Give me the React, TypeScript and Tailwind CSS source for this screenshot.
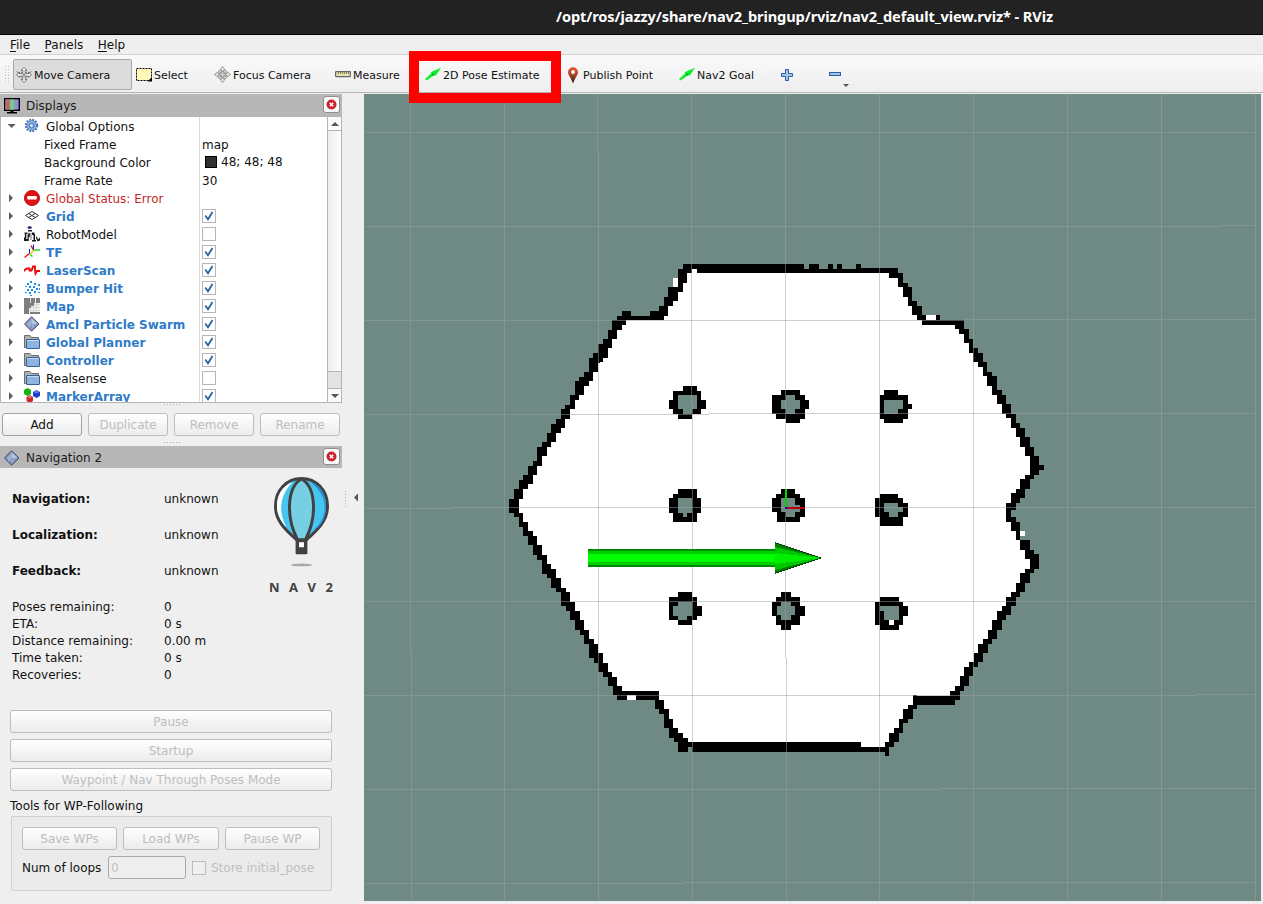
import React from "react";

type Box = [number, number, number, number];

const UNKNOWN = "#6f8984";

/* Occupancy map tiles. Each tile holds boxes (x1, y1, x2, y2) in thirds of a pixel. */
type Tile = { x: number; y: number; black: Box[]; gray: Box[]; white: Box[] };

const tiles: Tile[] = [
  {
    x: 500,
    y: 250,
    black: [
      [549, 42, 900, 57], [534, 57, 576, 69], [591, 42, 900, 69], [534, 57, 561, 99], [534, 99, 549, 126],
      [504, 111, 534, 153], [492, 141, 519, 168], [477, 168, 504, 198], [450, 183, 492, 210], [351, 198, 450, 210],
      [366, 183, 393, 210], [336, 211, 378, 225], [336, 211, 366, 240], [324, 240, 351, 267], [309, 267, 336, 294],
      [294, 282, 324, 324], [300, 324, 309, 336], [279, 309, 300, 339], [267, 324, 294, 366], [252, 366, 279, 393],
      [237, 381, 267, 408], [225, 393, 252, 435], [210, 435, 237, 450], [210, 450, 225, 477], [195, 465, 225, 477],
      [183, 477, 210, 507], [168, 507, 195, 534], [153, 522, 183, 549], [141, 549, 168, 576], [126, 576, 153, 591],
      [111, 591, 141, 618], [111, 618, 126, 648], [99, 633, 126, 648], [84, 648, 111, 675], [69, 675, 99, 702],
      [57, 690, 84, 717], [42, 717, 69, 747], [27, 747, 57, 789],
      [549, 408, 591, 435], [519, 423, 603, 492], [507, 450, 618, 477], [534, 492, 576, 507],
    ],
    gray: [[393, 183, 450, 198], [534, 435, 591, 477], [549, 477, 576, 492]],
    white: [[519, 84, 534, 111], [576, 57, 591, 69]],
  },
  {
    x: 780,
    y: 250,
    black: [
      [0, 42, 72, 69], [0, 54, 354, 69], [87, 42, 117, 57], [144, 42, 159, 57], [171, 42, 186, 57], [228, 42, 243, 57],
      [327, 69, 369, 84], [354, 69, 369, 111], [369, 99, 384, 111], [369, 111, 396, 141], [384, 141, 396, 168],
      [384, 153, 411, 168], [396, 168, 426, 195], [411, 195, 438, 210], [468, 195, 480, 210], [426, 210, 552, 225],
      [525, 225, 552, 237], [537, 237, 567, 252], [552, 252, 567, 279], [567, 267, 579, 309], [579, 294, 594, 309],
      [579, 309, 609, 336], [594, 336, 621, 351], [609, 351, 621, 378], [621, 366, 636, 378], [621, 378, 651, 408],
      [636, 408, 651, 435], [651, 420, 666, 435], [651, 435, 678, 462], [666, 462, 693, 492], [678, 492, 708, 504],
      [693, 504, 708, 534], [708, 519, 720, 534], [708, 534, 735, 561], [720, 561, 750, 591], [735, 591, 762, 618],
      [750, 618, 777, 675], [777, 645, 792, 660], [735, 675, 762, 687], [720, 687, 750, 717], [708, 717, 735, 744],
      [693, 729, 720, 759], [678, 759, 708, 780],
      [3, 420, 60, 435], [-24, 435, 75, 492], [75, 450, 87, 477], [-12, 492, 75, 507], [18, 507, 60, 519],
      [312, 420, 354, 435], [300, 435, 384, 507], [384, 462, 396, 477], [312, 507, 369, 519],
    ],
    gray: [
      [72, 42, 87, 57], [117, 42, 144, 57], [159, 42, 171, 57], [186, 42, 228, 57],
      [18, 435, 45, 450], [3, 450, 60, 477], [18, 477, 45, 492],
      [312, 450, 369, 477], [312, 477, 354, 492],
    ],
    white: [[438, 195, 468, 210]],
  },
  {
    x: 500,
    y: 490,
    black: [
      [42, 0, 69, 27], [27, 27, 57, 69], [42, 69, 69, 81], [57, 81, 69, 111], [57, 96, 84, 111], [69, 96, 84, 138],
      [69, 123, 99, 138], [84, 138, 111, 165], [99, 165, 126, 195], [111, 195, 141, 210], [126, 210, 141, 237],
      [126, 222, 153, 252], [141, 237, 168, 264], [153, 264, 183, 294], [168, 294, 198, 306], [183, 306, 210, 348],
      [198, 336, 225, 363], [210, 363, 240, 390], [225, 390, 252, 420], [240, 420, 267, 435], [252, 435, 267, 462],
      [252, 447, 282, 462], [267, 462, 294, 504], [282, 489, 309, 519], [294, 519, 324, 546], [309, 546, 336, 561],
      [324, 561, 351, 588], [339, 588, 366, 615], [351, 603, 477, 615], [351, 615, 381, 630], [408, 615, 477, 630],
      [465, 630, 492, 657], [477, 657, 507, 672], [492, 672, 507, 687], [492, 687, 519, 714], [507, 714, 534, 744],
      [522, 729, 549, 756], [534, 744, 564, 786], [564, 756, 576, 771], [576, 756, 900, 786],
      [534, -3, 591, 12], [519, 12, 591, 96], [507, 24, 603, 69],
      [534, 306, 576, 321], [507, 321, 591, 390], [591, 348, 606, 378], [534, 390, 576, 405],
    ],
    gray: [
      [564, 771, 576, 786],
      [534, 24, 576, 69], [549, 69, 561, 81],
      [534, 336, 576, 348], [519, 348, 576, 378], [534, 378, 561, 390],
    ],
    white: [[381, 615, 408, 630]],
  },
  {
    x: 780,
    y: 490,
    black: [
      [0, 756, 243, 786], [243, 771, 327, 786], [315, 756, 327, 798], [315, 756, 342, 771], [327, 729, 357, 756],
      [342, 714, 369, 729], [357, 687, 369, 729], [357, 687, 384, 699], [369, 657, 399, 687], [384, 645, 411, 657],
      [399, 615, 411, 645], [399, 618, 525, 645], [510, 603, 540, 630], [525, 588, 552, 603], [540, 558, 567, 588],
      [552, 531, 579, 558], [567, 516, 594, 531], [582, 489, 609, 516], [594, 462, 624, 489], [609, 447, 636, 462],
      [624, 420, 651, 447], [636, 390, 666, 420], [651, 363, 678, 390], [666, 348, 693, 375], [678, 321, 708, 348],
      [693, 306, 720, 321], [708, 279, 735, 306], [720, 249, 750, 279], [735, 237, 762, 249], [750, 192, 777, 237],
      [735, 180, 762, 207], [720, 150, 750, 180], [708, 123, 720, 150], [693, 96, 720, 123], [678, 39, 693, 96],
      [678, 81, 708, 96], [693, 9, 720, 39], [708, -3, 735, 24],
      [3, -3, 45, 12], [-12, 12, 60, 24], [-24, 24, 75, 66], [-9, 66, 75, 81], [-9, 81, 60, 96],
      [300, 12, 354, 24], [285, 24, 369, 81], [300, 81, 369, 108], [369, 39, 384, 81],
      [3, 306, 33, 321], [-12, 321, 60, 405], [-24, 336, 60, 378], [60, 348, 75, 378], [3, 405, 33, 420],
      [300, 321, 357, 336], [285, 336, 369, 405], [369, 348, 384, 378], [300, 405, 357, 420],
    ],
    gray: [
      [3, 24, 45, 66], [45, 45, 60, 66], [18, 66, 45, 81],
      [312, 39, 354, 66], [354, 52, 369, 66], [327, 66, 354, 81],
      [3, 336, 33, 348], [-9, 348, 45, 376], [3, 376, 33, 390],
      [300, 348, 357, 363], [312, 363, 357, 390],
    ],
    white: [[720, 123, 735, 138], [327, 390, 342, 405]],
  },
];

/* Free space: one span per pixel row, between the outermost walls. */
function freeSpacePath() {
  const walls = tiles.flatMap((t) =>
    t.black.map(([a, b, c, d]) => [t.x + a / 3, t.y + b / 3, t.x + c / 3, t.y + d / 3])
  );
  let path = "";
  for (let y = 264; y < 752; y++) {
    const hit = walls.filter((w) => w[1] <= y + 0.5 && w[3] >= y + 0.5);
    if (!hit.length) continue;
    const left = Math.round(Math.min(...hit.map((w) => w[0]))) + 1;
    const right = Math.round(Math.max(...hit.map((w) => w[2]))) - 1;
    if (right > left) path += `M${left} ${y}H${right}V${y + 1}H${left}Z`;
  }
  return path;
}
const freeSpace = freeSpacePath();

/* Grid line segments: fixed coordinate, start, end. */
const vertical: [number, number, number][] = [
  [410, 94, 650], [411, 650, 901], [504, 94, 901], [597, 94, 152], [598, 152, 901], [691, 94, 405], [692, 405, 901],
  [785, 94, 658], [786, 658, 901], [879, 94, 901], [973, 94, 901], [1067, 94, 901], [1161, 94, 901], [1255, 94, 901],
];
const horizontal: [number, number, number][] = [
  [132, 364, 1255], [226, 364, 1220], [225, 1220, 1255], [320, 364, 965], [319, 965, 1255], [414, 364, 709],
  [413, 709, 1255], [508, 364, 453], [507, 453, 1255], [601, 364, 1255], [695, 364, 1196], [694, 1196, 1255],
  [789, 364, 940], [788, 940, 1255], [883, 364, 684], [882, 684, 1255],
];

const boxPath = (boxes: Box[]) => boxes.map(([a, b, c, d]) => `M${a} ${b}H${c}V${d}H${a}Z`).join("");

function MapView() {
  return (
    <svg className="block h-[807px] w-[897px]" viewBox="364 94 897 807" shapeRendering="crispEdges">
      <rect x="364" y="94" width="897" height="807" fill={UNKNOWN} />
      <path d={freeSpace} fill="#fff" />
      {tiles.map((t) => (
        <g key={`${t.x}-${t.y}`} transform={`translate(${t.x} ${t.y}) scale(0.333333)`}>
          <path d={boxPath(t.black)} fill="#000" />
          <path d={boxPath(t.gray)} fill={UNKNOWN} />
          <path d={boxPath(t.white)} fill="#fff" />
        </g>
      ))}
      <g fill="#a0a0a4" fillOpacity="0.5">
        {vertical.map(([x, a, b]) => (
          <rect key={`v${x}`} x={x} y={a} width="1" height={b - a} />
        ))}
        {horizontal.map(([y, a, b]) => (
          <rect key={`h${y}`} x={a} y={y} width={b - a} height="1" />
        ))}
      </g>
      <rect x="785" y="507" width="20" height="2" fill="#b80000" />
      <rect x="785" y="489" width="2" height="19" fill="#00d400" />
      <rect x="785" y="507" width="2" height="2" fill="#0000d0" />
      <rect x="588" y="549" width="188" height="18" fill="#008a00" />
      <rect x="588" y="551" width="188" height="14" fill="#00ce00" />
      <rect x="588" y="554" width="188" height="8" fill="#00ff00" />
      <path d="M775 542L822 558L775 574Z" fill="#004000" />
      <path d="M775 543L819 558L775 573Z" fill="#008000" />
      <path d="M775 547L821 558L775 570Z" fill="#00c800" />
      <path d="M775 553L821 558L775 564Z" fill="#00ee00" />
    </svg>
  );
}

function MoveIcon() {
  return (
    <svg className="h-4 w-4" viewBox="0 0 16 16" fill="#f4f4f4" stroke="#6a6a6a" strokeWidth="0.9">
      <path d="M8 .5L11 3.500H9.200V6.500H12.500V5L15.500 8L12.500 10.500V9H9.200V12.500H11L8 15.500L5 12.500H6.800V9H3.500V10.500L.5 8L3.500 5V6.500H6.800V3.500H5Z" />
      <path d="M.5 4.500L4 6.500M15.500 4.500L12 6.500M5 4.800L11 10.800M11 4.800L5 10.800" fill="none" />
    </svg>
  );
}
function SelectIcon() {
  return (
    <svg className="h-4 w-4" viewBox="0 0 16 16">
      <rect x=".5" y="1.500" width="15" height="12" fill="#fdf8b8" stroke="#000" strokeDasharray="2 1" />
      <path d="M16 10V14.500H11.500Z" />
    </svg>
  );
}
function FocusIcon() {
  return (
    <svg className="h-[17px] w-[17px]" viewBox="0 0 17 17" fill="none" stroke="#8a8a8a">
      <circle cx="8.500" cy="8.500" r="5.200" fill="#e6e6e6" />
      <path d="M8.500 .4L10 2.500V5H7V2.500ZM8.500 16.600L10 14.500V12H7V14.500ZM.4 8.500L2.500 7H5V10H2.500ZM16.600 8.500L14.500 7H12V10H14.500Z" fill="#efefef" strokeWidth=".9" />
      <circle cx="8.500" cy="8.500" r="3" fill="#f2f2f2" />
      <path d="M7 5.800V11.200M10 5.800V11.200M5.800 7H11.200M5.800 10H11.200" strokeWidth=".8" />
    </svg>
  );
}
function RulerIcon() {
  return (
    <svg className="h-4 w-4" viewBox="0 0 16 16">
      <rect x=".6" y="4.600" width="14.800" height="5" rx=".5" fill="#e9e3ae" stroke="#666" strokeWidth="1.200" />
      <path d="M3.500 5V7M5.500 5V7M7.500 5V7M9.500 5V7M11.500 5V7M13.500 5V7" stroke="#77704a" strokeWidth=".8" />
    </svg>
  );
}
function GreenArrow() {
  return (
    <svg className="h-4 w-4" viewBox="0 0 16 16">
      <path d="M0 12L6.500 6.200L5.500 5.300L16 .8L10.500 9L9.500 8L1.500 13.500Z" fill="#0cf02c" />
      <path d="M6.500 6.200L9.500 8L8 8.200Z" fill="#064d0c" />
    </svg>
  );
}
function PinIcon() {
  return (
    <svg className="h-4 w-3" viewBox="0 0 12 16">
      <defs>
        <linearGradient id="pin" x2="0" y2="1">
          <stop offset="0" stopColor="#e9532e" />
          <stop offset=".5" stopColor="#a8452a" />
          <stop offset="1" stopColor="#3d1d14" />
        </linearGradient>
      </defs>
      <path d="M6 .2A5 5 0 0 1 11 5.200C11 8.500 7.500 11 6.500 15.800H5.500C4.500 11 1 8.500 1 5.200A5 5 0 0 1 6 .2Z" fill="url(#pin)" />
      <circle cx="6" cy="5" r="1.900" fill="#fff" />
    </svg>
  );
}
function PlusIcon() {
  return (
    <svg className="h-3 w-3" viewBox="0 0 12 12">
      <path d="M4.500 .5H7.500V4.500H11.500V7.500H7.500V11.500H4.500V7.500H.5V4.500H4.500Z" fill="#9fc3ea" stroke="#2f5d9d" />
    </svg>
  );
}
function CloseButton() {
  return (
    <div className="mb-px mr-0.5 flex h-[17px] w-[17px] items-start justify-center rounded-[3px] border border-[#8d8d8d] bg-[#fbfbfb] pt-[2px]">
      <svg className="h-[11px] w-[11px]" viewBox="0 0 11 11">
        <circle cx="5.500" cy="5.500" r="5" fill="#c8262b" />
        <path d="M3.800 3.800L7.200 7.200M7.200 3.800L3.800 7.200" stroke="#fff" strokeWidth="1.500" />
      </svg>
    </div>
  );
}
function Diamond() {
  return (
    <svg className="h-4 w-4" viewBox="0 0 16 16">
      <path d="M7.500 .8L15 8L7.500 15.200L.6 8Z" fill="#8798bf" stroke="#3a4668" />
      <path d="M7.500 2L13.500 8L7.500 8Z" fill="#b9c5de" />
      <path d="M3 8L7 4L7.500 8L5 12ZM8 9L11 8L8 13Z" fill="#a3b1d0" />
    </svg>
  );
}

type IconName =
  | "gear" | "error" | "grid" | "robot" | "tf" | "laser" | "points" | "map" | "diamond" | "folder" | "markers";

function TreeIcon({ name }: { name: IconName }) {
  const cls = "h-4 w-4";
  switch (name) {
    case "gear":
      return (
        <svg className={cls} viewBox="0 0 16 16" fill="none">
          <circle cx="7.500" cy="7.500" r="5.700" stroke="#3f6fb0" strokeWidth="2" strokeDasharray="1.800 1.200" />
          <circle cx="7.500" cy="7.500" r="4.800" fill="#93b6e2" stroke="#4a7abb" strokeWidth=".8" />
          <circle cx="7.500" cy="7.500" r="2.500" fill="#a9c5e8" stroke="#4575b5" />
          <circle cx="7.500" cy="7.500" r=".8" fill="#fff" />
        </svg>
      );
    case "error":
      return (
        <svg className={cls} viewBox="0 0 16 16">
          <circle cx="8" cy="8" r="7.600" fill="#e01010" stroke="#a80808" strokeWidth=".8" />
          <rect x="3.200" y="6" width="9.600" height="3.600" rx=".8" fill="#fff" />
        </svg>
      );
    case "grid":
      return (
        <svg className={cls} viewBox="0 0 16 16" fill="none" stroke="#333">
          <path d="M8 3.500L14.500 7.500L8 11.500L1.500 7.500ZM4.700 5.500L11.200 9.500M11.200 5.500L4.700 9.500" />
        </svg>
      );
    case "robot":
      return (
        <svg className={cls} viewBox="0 0 16 16">
          <ellipse cx="5.700" cy="1.600" rx="2.200" ry="1.300" fill="#20297a" />
          <path d="M4 4H8V5.500H4ZM.5 6.500H3.500V8H2V13H3.500V15H0V12L1 10.500ZM4.500 7H5.800V11H4.800V15H3.500V10ZM8 6.500H10.500V8H11V14H12V15.500H8V14H9.500V9H8ZM12.500 10L14 13.500L16 11.500V14.500L13.500 15.500L12 12Z" fill="#1c1c1c" />
          <path d="M6.900 7V14M2.900 8.500V12.500" stroke="#9a9a9a" strokeWidth="1.400" />
        </svg>
      );
    case "tf":
      return (
        <svg className={cls} viewBox="0 0 16 16" fill="none" strokeWidth="1.500">
          <path d="M9.500 6H16" stroke="#18e018" />
          <path d="M6.500 10L9.500 6.500" stroke="#f4d000" />
          <path d="M9.500 6L7 1.500" stroke="#f01010" />
          <path d="M9.500 .5V5.500" stroke="#1818e0" strokeWidth="1" />
          <path d="M.5 13.500L5.500 9.500" stroke="#f01010" />
          <path d="M5.500 5V9.500" stroke="#1818e0" strokeWidth="1" />
          <path d="M6 10.500L8.500 12.500" stroke="#18e018" />
        </svg>
      );
    case "laser":
      return (
        <svg className={cls} viewBox="0 0 16 16" fill="none" stroke="#f00000" strokeWidth="1.800">
          <path d="M.5 9.500V8L3 6.500H5.500V8.500H7.500L9 4.500H11V8L11.500 11.500L13 9H16" />
        </svg>
      );
    case "points":
      return (
        <svg className={cls} viewBox="0 0 16 16" shapeRendering="crispEdges">
          <path d="M6 1h2v2h-2zM3 3h2v2h-2zM10 3h2v2h-2zM14 4h2v2h-2zM1 6h2v1h-2zM5 6h2v2h-2zM9 6h2v2h-2zM12 8h2v2h-2zM3 9h2v2h-2zM7 9h2v2h-2zM15 8h1v2h-1zM1 12h2v1h-2zM5 12h2v2h-2zM10 11h2v2h-2zM14 12h2v1h-2zM6 15h2v1h-2z" fill="#1a8cf0" />
        </svg>
      );
    case "map":
      return (
        <svg className={cls} viewBox="0 0 16 16" shapeRendering="crispEdges">
          <rect width="16" height="16" fill="#efefec" />
          <path d="M3 0V16M6 0V16M9 0V16M12 0V16M0 3H16M0 6H16M0 9H16M0 12H16" stroke="#ccc" strokeWidth=".6" />
          <path d="M0 0H6V6H5V16H0ZM7 0H11V5H10V8H7V10H5V5H7ZM12 0H16V5H12ZM6 14H16V16H6Z" fill="#7e7e7e" />
        </svg>
      );
    case "diamond":
      return <Diamond />;
    case "folder":
      return (
        <svg className={cls} viewBox="0 0 16 16">
          <path d="M.5 1.500H6L7.500 3.500H14.500V13.500H.5Z" fill="#b0b0ac" stroke="#6d6d6a" />
          <rect x="2.500" y="5.500" width="13" height="9" rx=".5" fill="#8db3de" stroke="#33619f" />
          <path d="M3 6.500H15" stroke="#c4d9ef" />
        </svg>
      );
    case "markers":
      return (
        <svg className={cls} viewBox="0 0 16 16">
          <path d="M0 2L3.500 0L7 2V6L3.500 8L0 6Z" fill="#12b412" />
          <path d="M9 4L12.500 2L16 4V8L12.500 10L9 8Z" fill="#1c3fd0" />
          <path d="M2.500 9L5.800 7L9 9V13L5.800 15L2.500 13Z" fill="#cc2626" />
          <path d="M9.500 4L12.500 2.500L15.500 4L12.500 5.500Z" fill="#5d82ea" />
          <path d="M3 9L5.800 7.500L8.500 9L5.800 10.500Z" fill="#e86a6a" />
        </svg>
      );
  }
}

function Check({ on }: { on: boolean }) {
  return (
    <span className="flex h-3.5 w-3.5 items-center justify-center border border-[#b5b5b5] bg-white">
      {on && (
        <svg className="h-2.5 w-2.5" viewBox="0 0 10 10" fill="none" stroke="#2765a5" strokeWidth="1.800">
          <path d="M1.300 4.500L4 8.300L8.500 1" />
        </svg>
      )}
    </span>
  );
}

const rows: { icon: IconName; label: string; on?: boolean; style: string }[] = [
  { icon: "error", label: "Global Status: Error", style: "text-[#c62828]" },
  { icon: "grid", label: "Grid", on: true, style: "font-bold text-[#2f7bc8]" },
  { icon: "robot", label: "RobotModel", on: false, style: "" },
  { icon: "tf", label: "TF", on: true, style: "font-bold text-[#2f7bc8]" },
  { icon: "laser", label: "LaserScan", on: true, style: "font-bold text-[#2f7bc8]" },
  { icon: "points", label: "Bumper Hit", on: true, style: "font-bold text-[#2f7bc8]" },
  { icon: "map", label: "Map", on: true, style: "font-bold text-[#2f7bc8]" },
  { icon: "diamond", label: "Amcl Particle Swarm", on: true, style: "font-bold text-[#2f7bc8]" },
  { icon: "folder", label: "Global Planner", on: true, style: "font-bold text-[#2f7bc8]" },
  { icon: "folder", label: "Controller", on: true, style: "font-bold text-[#2f7bc8]" },
  { icon: "folder", label: "Realsense", on: false, style: "" },
  { icon: "markers", label: "MarkerArray", on: true, style: "font-bold text-[#2f7bc8]" },
];

function Row({ icon, label, style = "", open, children }: {
  icon?: IconName; label: string; style?: string; open?: boolean; children?: React.ReactNode;
}) {
  return (
    <div className="flex h-[18px] shrink-0 items-center">
      <div className="flex w-[198px] shrink-0 items-center whitespace-nowrap">
        {icon ? (
          <>
            <svg className="ml-[7px] h-2 w-2" viewBox="0 0 8 8" fill="#5c5c5c">
              {open ? <path d="M-.3 2H7.700L3.700 6Z" /> : <path d="M1 0L5 4L1 8Z" />}
            </svg>
            <span className="ml-2 w-[22px]"><TreeIcon name={icon} /></span>
          </>
        ) : (
          <span className="w-[43px]" />
        )}
        <span className={`pt-0.5 ${style}`}>{label}</span>
      </div>
      <div className="flex items-center pl-[3px]">{children}</div>
    </div>
  );
}

function Button({ children, className = "" }: { children: string; className?: string }) {
  return (
    <button
      disabled
      className={`flex h-[23px] items-center justify-center rounded-[3px] border border-[#bdbdbd] bg-linear-to-b from-white to-[#ececec] pt-0.5 text-[#bebebe] ${className}`}
    >
      {children}
    </button>
  );
}

function DockHeader({ icon, title }: { icon: React.ReactNode; title: string }) {
  return (
    <div className="flex h-[22px] w-[342px] items-center bg-[#b7b7b7] pl-1 text-[#1a1a1a]">
      <span className="pt-0.5">{icon}</span>
      <span className="ml-1.5 grow pt-0.5">{title}</span>
      <CloseButton />
    </div>
  );
}

function Balloon() {
  return (
    <svg className="mr-px h-[93px] w-[57px]" viewBox="0 0 58 92" preserveAspectRatio="none">
      <path d="M29 1.500C44 1.500 55.500 13 55.500 29C55.500 43 46 52 33 63H25C12 52 2.500 43 2.500 29C2.500 13 14 1.500 29 1.500Z" fill="#46c5f0" stroke="#414042" strokeWidth="3" />
      <path d="M20 5C9 9 4 18 4 29C4 37 8 44 14 50C8 40 3 22 20 5Z" fill="#fff" />
      <path d="M38 5C50 14 54 24 52 35C50 44 46 48 42 52C50 49 54 39 54 29C54 18 49 8 38 5Z" fill="#2a8fd0" />
      <path d="M25 62C13 40 14 10 29 2C44 10 45 40 33 62Z" fill="#77cfe4" stroke="#414042" strokeWidth="3" />
      <rect x="23" y="61.500" width="12" height="15" rx="1" fill="#414042" />
      <rect x="26.500" y="64.500" width="5" height="5" fill="#fff" />
      <ellipse cx="29" cy="87" rx="11" ry="1.400" fill="#a7a9ac" />
    </svg>
  );
}

const statuses = ["Navigation:", "Localization:", "Feedback:"];
const metrics = [
  ["Poses remaining:", "0"],
  ["ETA:", "0 s"],
  ["Distance remaining:", "0.00 m"],
  ["Time taken:", "0 s"],
  ["Recoveries:", "0"],
];

function ToolButton({ icon, label, className }: { icon: React.ReactNode; label: string; className: string }) {
  return (
    <div className={`flex h-[31px] shrink-0 items-center whitespace-nowrap ${className}`}>
      {icon}
      <span className="pt-0.5">{label}</span>
    </div>
  );
}

export default function App() {
  return (
    <div className="relative flex h-[904px] w-[1263px] flex-col overflow-hidden bg-[#efefef] font-['DejaVu_Sans',sans-serif] text-[12px] leading-[17px] text-[#111]">
      <div className="flex h-[35px] shrink-0 items-center justify-center border-b border-black bg-[#222] pl-[346px] font-['Noto_Sans',sans-serif] text-[14.600px] font-bold text-white">
        <span className="-mt-px whitespace-nowrap tracking-[-0.11px]">/opt/ros/jazzy/share/nav2_bringup/rviz/nav2_default_view.rviz* - RViz</span>
      </div>

      <nav className="flex h-[20px] shrink-0 items-center gap-[14.500px] border-b border-[#d2d2d2] pl-2.5 pt-0.5">
        {["File", "Panels", "Help"].map((m) => (
          <span key={m}><u className="underline-offset-2">{m[0]}</u>{m.slice(1)}</span>
        ))}
      </nav>

      <div className="flex h-[38px] shrink-0 items-center border-b border-[#b4b4b4] bg-linear-to-b from-[#fafafa] to-[#eeeeee] pt-0.5 text-[11px]">
        <svg className="ml-[5px] h-[18px] w-[8px]" viewBox="0 0 8 18">
          <path d="M.5 0V18M3.500 0V18" stroke="#bdbdbd" strokeDasharray="1 2" />
        </svg>
        <ToolButton icon={<MoveIcon />} label="Move Camera" className="w-[119px] gap-0.5 rounded-[2px] border border-[#a9a9a9] bg-[#dcdcdc] pl-[2px]" />
        <ToolButton icon={<SelectIcon />} label="Select" className="ml-1 w-[78px] gap-0.5" />
        <ToolButton icon={<FocusIcon />} label="Focus Camera" className="w-[121px] gap-0.5" />
        <ToolButton icon={<RulerIcon />} label="Measure" className="w-[90px] gap-0.5" />
        <ToolButton icon={<GreenArrow />} label="2D Pose Estimate" className="w-[142px] gap-0.5" />
        <ToolButton icon={<PinIcon />} label="Publish Point" className="w-[112px] gap-1" />
        <ToolButton icon={<GreenArrow />} label="Nav2 Goal" className="w-[102px] gap-0.5" />
        <PlusIcon />
        <svg className="ml-9 h-6 w-[22px]" viewBox="0 0 22 24">
          <rect x=".5" y="9.500" width="11" height="3" fill="#9fc3ea" stroke="#2f5d9d" />
          <path d="M14 21H20L17 24Z" fill="#555" />
        </svg>
      </div>

      <div className="flex h-[811px] pt-px">
        <aside className="flex w-[342px] shrink-0 flex-col">
          <DockHeader
            icon={
              <svg className="h-4 w-4" viewBox="0 0 16 16">
                <rect x=".7" y=".7" width="14.600" height="11.600" fill="#8f8fd8" stroke="#000" strokeWidth="1.400" />
                <rect x="1.400" y="1.400" width="4.500" height="10.200" fill="#b86a6a" />
                <rect x="5.900" y="1.400" width="4.500" height="10.200" fill="#80c880" />
                <path d="M6.500 12.500H9.500V14H13V15.500H3V14H6.500Z" />
              </svg>
            }
            title="Displays"
          />
          <div className="flex h-[287px] border border-[#b4b4b4] bg-white">
            <div className="flex w-[327px] shrink-0 flex-col overflow-hidden border-r border-[#b4b4b4] bg-[linear-gradient(#dcdcdc,#dcdcdc)] bg-[length:1px_100%] bg-[position:198px_0] bg-no-repeat">
              <Row icon="gear" label="Global Options" open />
              <Row label="Fixed Frame"><span className="pt-0.5">map</span></Row>
              <Row label="Background Color">
                <span className="ml-[3px] mr-1 h-3 w-3 border border-black bg-[#303030]" />
                <span>48; 48; 48</span>
              </Row>
              <Row label="Frame Rate"><span className="pt-0.5">30</span></Row>
              {rows.map((r) => (
                <Row key={r.label} icon={r.icon} label={r.label} style={r.style}>
                  {r.on !== undefined && <Check on={r.on} />}
                </Row>
              ))}
            </div>
            <div className="flex w-[13px] shrink-0 flex-col bg-linear-to-r from-[#ededed] to-white">
              <div className="flex h-3.5 items-center justify-center border-b border-[#b4b4b4] bg-[#fafafa]">
                <svg className="h-2 w-2" viewBox="0 0 8 8"><path d="M0 6H8L4 2Z" fill="#555" /></svg>
              </div>
              <div className="grow" />
              <div className="h-[18px] border-y border-[#b4b4b4] bg-[#e3e3e3]" />
              <div className="flex h-[13px] items-center justify-center bg-[#fafafa]">
                <svg className="h-2 w-2" viewBox="0 0 8 8"><path d="M0 2H8L4 6Z" fill="#555" /></svg>
              </div>
            </div>
          </div>
          <div className="ml-[164px] mt-px h-px w-[17px] bg-[repeating-linear-gradient(90deg,#b0b0b0_0_1px,transparent_1px_3px)]" />
          <div className="mt-2 flex gap-1.5 pl-0.5">
            <button className="flex h-[23px] w-20 items-center justify-center rounded-[3px] border border-[#a2a2a2] bg-linear-to-b from-white to-[#ececec] pt-0.5">Add</button>
            <Button className="w-20">Duplicate</Button>
            <Button className="w-20">Remove</Button>
            <Button className="w-20">Rename</Button>
          </div>
          <div className="mb-[3px] ml-[164px] mt-[6px] h-px w-[17px] bg-[repeating-linear-gradient(90deg,#b0b0b0_0_1px,transparent_1px_3px)]" />
          <DockHeader icon={<Diamond />} title="Navigation 2" />

          <div className="flex h-[131px]">
            <div className="flex w-[269px] flex-col pt-[13px]">
              {statuses.map((s) => (
                <div key={s} className="flex h-9 items-center pl-3">
                  <span className="w-[152px] font-bold">{s}</span>
                  <span>unknown</span>
                </div>
              ))}
            </div>
            <div className="flex flex-col items-center pt-[9px]">
              <Balloon />
              <div className="mr-px mt-[9px] flex w-[64px] justify-between font-['Open_Sans',sans-serif] text-[13px] font-bold leading-[16px] text-[#414042]">
                <span>N</span><span>A</span><span>V</span><span>2</span>
              </div>
            </div>
          </div>
          <div className="flex flex-col pl-3">
            {metrics.map(([k, v]) => (
              <div key={k} className="flex h-[17px] items-center">
                <span className="w-[152px]">{k}</span>
                <span>{v}</span>
              </div>
            ))}
          </div>
          <div className="mt-[26px] flex flex-col gap-1.5 pl-2.5">
            <Button className="w-[322px]">Pause</Button>
            <Button className="w-[322px]">Startup</Button>
            <Button className="w-[322px]">Waypoint / Nav Through Poses Mode</Button>
          </div>
          <div className="mt-[7px] pl-2.5">Tools for WP-Following</div>
          <div className="ml-[11px] mt-px h-[75px] w-[321px] rounded-[2px] border border-[#d0d0d0] bg-[#ebebeb] px-2.5 pt-2.5">
            <div className="flex gap-1.5">
              <Button className="w-[95px]">Save WPs</Button>
              <Button className="w-[96px]">Load WPs</Button>
              <Button className="w-[95px]">Pause WP</Button>
            </div>
            <div className="mt-1.5 flex items-center whitespace-nowrap">
              <span className="w-[86px] pt-0.5">Num of loops</span>
              <span className="flex h-[23px] w-[78px] items-center rounded-[3px] border border-[#a8a8a8] bg-[#efefef] pl-0.5 pt-0.5 text-[#bebebe]">0</span>
              <span className="ml-1.5 h-3.5 w-3.5 border border-[#bdbdbd] bg-[#efefef]" />
              <span className="ml-[5px] pt-0.5 text-[#bebebe]">Store initial_pose</span>
            </div>
          </div>
        </aside>
        <div className="flex w-[22px] shrink-0 items-start pt-[396px]">
          <svg className="h-[18px] w-[22px]" viewBox="0 0 22 18">
            <path d="M3.500 1V18" stroke="#b0b0b0" strokeDasharray="1 2" />
            <path d="M16 3.500V11.500L12 7.500Z" fill="#555" />
          </svg>
        </div>
        <MapView />
      </div>

      <div className="absolute left-[409px] top-[51px] h-[52px] w-[152px] border-[10px] border-[#fe0000]" />
    </div>
  );
}
